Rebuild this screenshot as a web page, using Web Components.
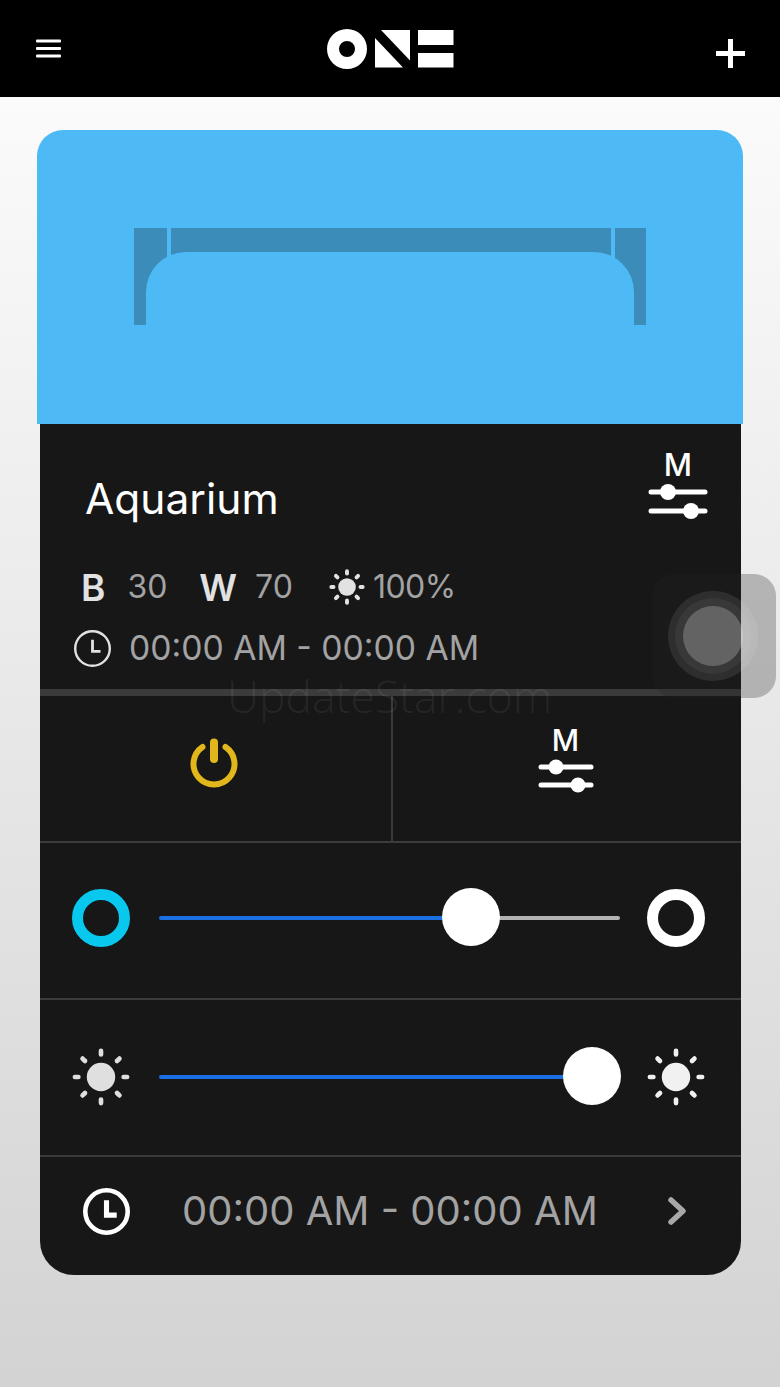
<!DOCTYPE html>
<html lang="en">
<head>
<meta charset="utf-8">
<title>Aquarium</title>
<style>
  html, body { margin: 0; height: 1387px; overflow: hidden; }
  body { background: linear-gradient(#fbfbfb 97px, #d3d3d3 100%); font-family: Inter, "Liberation Sans", sans-serif; position: relative; }
</style>
</head>
<body>
<app-header></app-header>
<light-card name="Aquarium">
  <light-stats blue="30" white="70" level="100%" time="00:00 AM - 00:00 AM"></light-stats>
  <light-actions></light-actions>
  <light-slider value="67.7" kind="color" lift="6"></light-slider>
  <light-slider value="93.9" kind="sun" lift="2"></light-slider>
  <light-schedule time="00:00 AM - 00:00 AM"></light-schedule>
</light-card>
<water-mark>UpdateStar.com</water-mark>
<assistive-touch></assistive-touch>

<script>
// iconos compartidos
const sunSvg = (size, color, sw = 8) => {
  let rays = ''
  for (let a = 0; a < 360; a += 45) {
    rays += `<line x1="50" y1="${sw / 2 + 1}" x2="50" y2="${sw / 2 + 7}" transform="rotate(${a} 50 50)"/>`
  }
  return `<svg width="${size}" height="${size}" viewBox="0 0 100 100" stroke="${color}" stroke-width="${sw}" stroke-linecap="round" fill="${color}">
    ${rays}<circle cx="50" cy="50" r="24.5" stroke="none"/></svg>`
}

const clockSvg = (size, color, sw, hand) => `<svg width="${size}" height="${size}" viewBox="0 0 46 46" fill="none" stroke="${color}">
  <circle cx="23" cy="23" r="${23 - sw / 2}" stroke-width="${sw}"/>
  <path d="M23 12V26.5H33" stroke-width="${hand}" stroke-linejoin="miter"/></svg>`

class AppHeader extends HTMLElement {
  constructor() {
    super()
    this.attachShadow({ mode: 'open' })
  }
  connectedCallback() {
    this.shadowRoot.innerHTML = `
    <style>
      :host { display: flex; height: 97px; background: #000; justify-content: space-between; align-items: flex-start; padding: 0 35px 0 36px; }
      svg { display: block; }
      .menu { margin-top: 39px; }
      .logo { margin: 29px 0 0 4px; }
      .plus { margin-top: 39px; }
    </style>
    <svg class="menu" width="25" height="19" viewBox="0 0 25 19" fill="#fff">
      <rect y="0.5" width="25" height="3" rx="1"/><rect y="8" width="25" height="3" rx="1"/><rect y="15.5" width="25" height="3" rx="1"/>
    </svg>
    <svg class="logo" width="127" height="40" viewBox="327 29 127 40" fill="#fff">
      <path fill-rule="evenodd" d="M347 29a20 20 0 1 0 0 40a20 20 0 1 0 0-40ZM347 41a8 8 0 1 1 0 16a8 8 0 1 1 0-16Z"/>
      <path d="M381 30H410V60.5Z"/>
      <path d="M375 38L403 67.5H375Z"/>
      <rect x="418" y="30" width="35.5" height="15"/>
      <rect x="418" y="53" width="35.5" height="14.5"/>
    </svg>
    <svg class="plus" width="29" height="29" viewBox="0 0 29 29" fill="#fff">
      <rect x="12" width="5" height="29"/><rect y="12" width="29" height="5"/>
    </svg>
    `
  }
}

class LampPreview extends HTMLElement {
  constructor() {
    super()
    this.attachShadow({ mode: 'open' })
  }
  connectedCallback() {
    this.shadowRoot.innerHTML = `
    <style>
      :host { display: flex; height: 294px; background: #4dbaf5; border-radius: 26px 26px 0 0; justify-content: center; padding-top: 98px; box-sizing: border-box; }
      svg { display: block; }
    </style>
    <svg width="512" height="97" viewBox="134 228 512 97">
      <rect x="134" y="228" width="512" height="97" fill="#3b8cb9"/>
      <path fill="#4dbaf5" d="M167 228H171V262H167ZM611 228H615V262H611ZM146 325V292A40 40 0 0 1 186 252H594A40 40 0 0 1 634 292V325Z"/>
    </svg>
    `
  }
}

class ModeIcon extends HTMLElement {
  constructor() {
    super()
    this.attachShadow({ mode: 'open' })
  }
  connectedCallback() {
    const w = Number(this.getAttribute('width') ?? '60')
    const a = Number(this.getAttribute('a') ?? '20')
    const b = Number(this.getAttribute('b') ?? '43')
    const r = this.getAttribute('r') ?? '8'
    const t = this.getAttribute('thick') ?? '5'
    const gap = Number(this.getAttribute('gap') ?? '19')
    this.shadowRoot.innerHTML = `
    <style>
      :host { display: inline-flex; flex-direction: column; align-items: center; color: #fff; }
      span { font: 500 ${this.getAttribute('font') ?? '31'}px/30px Inter, "Liberation Sans", sans-serif; }
      svg { display: block; margin-top: 3px; }
    </style>
    <span>M</span>
    <svg width="${w}" height="${gap + 18}" fill="#fff" stroke="#fff" stroke-width="${t}" stroke-linecap="round">
      <line x1="3" x2="${w - 3}" y1="9" y2="9"/><line x1="3" x2="${w - 3}" y1="${9 + gap}" y2="${9 + gap}"/>
      <circle cx="${a}" cy="9" r="${r}" stroke="none"/><circle cx="${b}" cy="${9 + gap}" r="${r}" stroke="none"/>
    </svg>
    `
  }
}

class LightCard extends HTMLElement {
  constructor() {
    super()
    this.attachShadow({ mode: 'open' })
  }
  connectedCallback() {
    this.shadowRoot.innerHTML = `
    <style>
      :host { display: block; width: 706px; margin: 33px 0 0 37px; }
      .body { margin: 0 2px 0 3px; background: #171718; border-radius: 0 0 34px 34px; overflow: hidden; }
      .head { display: flex; justify-content: space-between; align-items: flex-start; padding: 26px 33px 0 45px; height: 100px; box-sizing: border-box; }
      h1 { margin: 23px 0 0; font: 400 42.5px/52px Inter, "Liberation Sans", sans-serif; color: #fff; }
    </style>
    <lamp-preview></lamp-preview>
    <div class="body">
      <div class="head">
        <h1>${this.getAttribute('name')}</h1>
        <mode-icon></mode-icon>
      </div>
      <slot></slot>
    </div>
    `
  }
}

class LightStats extends HTMLElement {
  constructor() {
    super()
    this.attachShadow({ mode: 'open' })
  }
  connectedCallback() {
    this.shadowRoot.innerHTML = `
    <style>
      :host { display: block; height: 172px; padding-top: 43px; box-sizing: border-box; border-bottom: 7px solid #3b3b3c; color: #a3a3a3; font: 400 32px/40px Inter, "Liberation Sans", sans-serif; }
      .levels { display: flex; align-items: center; height: 40px; padding-left: 41px; }
      b { color: #e2e2e2; font-weight: 600; font-size: 37px; margin-top: 2px; }
      .n { margin-left: 22px; }
      .w { margin-left: 32px; }
      .n2 { margin-left: 18px; }
      .sun { display: flex; margin-left: 36px; margin-right: 8px; }
      .pct { letter-spacing: -0.5px; }
      .time { display: flex; align-items: center; height: 40px; margin-top: 21px; padding-left: 34px; font-size: 33.7px; }
      .time svg { margin-right: 18px; }
    </style>
    <div class="levels">
      <b>B</b><span class="n">${this.getAttribute('blue')}</span>
      <b class="w">W</b><span class="n2">${this.getAttribute('white')}</span>
      <span class="sun">${sunSvg(36, '#e2e2e2', 11)}</span><span class="pct">${this.getAttribute('level')}</span>
    </div>
    <div class="time">${clockSvg(37, '#e2e2e2', 3, 3.5)}<span>${this.getAttribute('time')}</span></div>
    `
  }
}

class LightActions extends HTMLElement {
  constructor() {
    super()
    this.attachShadow({ mode: 'open' })
  }
  connectedCallback() {
    this.shadowRoot.innerHTML = `
    <style>
      :host { display: grid; grid-template-columns: 353px 1fr; height: 147px; box-sizing: border-box; border-bottom: 2px solid #3b3b3c; }
      div { display: flex; align-items: center; justify-content: center; box-sizing: border-box; }
      .power { border-right: 2px solid #3b3b3c; padding: 0 4px 12px 0; }
      .mode { padding: 0 3px 18px 0; }
      svg { display: block; }
    </style>
    <div class="power">
      <svg width="48" height="50" viewBox="0 0 48 50" fill="none" stroke="#e2b71b" stroke-width="6" stroke-linecap="round">
        <path d="M12.5 9A20.5 20.5 0 1 0 35.5 9"/><line x1="24" y1="4.5" x2="24" y2="21" stroke-width="8"/>
      </svg>
    </div>
    <div class="mode"><mode-icon width="56" a="18" b="40" r="7.5" thick="5" gap="18" font="30"></mode-icon></div>
    `
  }
}

class LightSlider extends HTMLElement {
  constructor() {
    super()
    this.attachShadow({ mode: 'open' })
  }
  connectedCallback() {
    const value = this.getAttribute('value') ?? '50'
    const isSun = this.getAttribute('kind') === 'sun'
    const lift = this.getAttribute('lift') ?? '0'
    const ring = c => `<span class="ring" style="border-color:${c}"></span>`
    this.shadowRoot.innerHTML = `
    <style>
      :host { display: flex; align-items: center; height: 157px; box-sizing: border-box; border-bottom: 2px solid #3b3b3c; padding: 0 36px ${lift}px 32px; }
      .ico { display: flex; flex: none; width: 58px; height: 58px; }
      .ring { width: 58px; height: 58px; box-sizing: border-box; border: 11.5px solid; border-radius: 50%; }
      .track { position: relative; flex: 1; height: 4px; margin: 0 27px 0 29px; border-radius: 2px;
        background: linear-gradient(90deg, #1a6fe3 ${value}%, #b3b3b3 ${value}%); }
      .thumb { position: absolute; left: ${value}%; top: 50%; width: 58px; height: 58px; margin: -30px 0 0 -29px; border-radius: 50%; background: #fff; }
    </style>
    <span class="ico">${isSun ? sunSvg(58, '#dfdfdf') : ring('#08c8ee')}</span>
    <div class="track"><span class="thumb"></span></div>
    <span class="ico">${isSun ? sunSvg(58, '#f1f1f1') : ring('#fff')}</span>
    `
  }
}

class LightSchedule extends HTMLElement {
  constructor() {
    super()
    this.attachShadow({ mode: 'open' })
  }
  connectedCallback() {
    this.shadowRoot.innerHTML = `
    <style>
      :host { display: flex; align-items: center; height: 118px; padding: 0 53px 10px 43px; box-sizing: border-box; color: #a3a3a3; font: 400 40px/46px Inter, "Liberation Sans", sans-serif; }
      span { flex: 1; padding-left: 52px; white-space: nowrap; }
      svg { display: block; flex: none; }
    </style>
    ${clockSvg(47, '#fff', 4.5, 5)}
    <span>${this.getAttribute('time')}</span>
    <svg width="22" height="30" viewBox="0 0 22 30" fill="none" stroke="#a8a8a8" stroke-width="5.5" stroke-linecap="round" stroke-linejoin="round"><path d="M5 4L17 15L5 26"/></svg>
    `
  }
}

class WaterMark extends HTMLElement {
  constructor() {
    super()
    this.attachShadow({ mode: 'open' })
  }
  connectedCallback() {
    this.shadowRoot.innerHTML = `
    <style>
      :host { position: absolute; left: 227px; top: 671px; color: rgba(255,255,255,.07); font: 300 44.5px/50px "Open Sans", Lato, sans-serif; white-space: nowrap; }
    </style>
    <slot></slot>
    `
  }
}

class AssistiveTouch extends HTMLElement {
  constructor() {
    super()
    this.attachShadow({ mode: 'open' })
  }
  connectedCallback() {
    this.shadowRoot.innerHTML = `
    <style>
      :host { position: absolute; left: 652px; top: 574px; width: 124px; height: 124px; border-radius: 22px; background: rgba(37,37,37,.28); overflow: hidden; }
      i { position: absolute; border-radius: 50%; }
      .a { left: 16px; top: 17px; width: 90px; height: 90px; background: rgba(255,255,255,.09); }
      .b { left: 23px; top: 24px; width: 76px; height: 76px; background: rgba(255,255,255,.05); }
      .c { left: 31px; top: 32px; width: 60px; height: 60px; background: rgba(255,255,255,.22); }
    </style>
    <i class="a"></i><i class="b"></i><i class="c"></i>
    `
  }
}

customElements.define('app-header', AppHeader)
customElements.define('lamp-preview', LampPreview)
customElements.define('mode-icon', ModeIcon)
customElements.define('light-card', LightCard)
customElements.define('light-stats', LightStats)
customElements.define('light-actions', LightActions)
customElements.define('light-slider', LightSlider)
customElements.define('light-schedule', LightSchedule)
customElements.define('water-mark', WaterMark)
customElements.define('assistive-touch', AssistiveTouch)
</script>
</body>
</html>
